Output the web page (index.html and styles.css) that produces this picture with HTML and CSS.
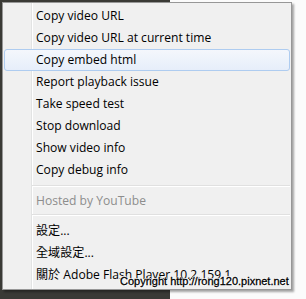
FILE: index.html
```html
<!DOCTYPE html>
<html lang="zh-Hant">
<head>
  <meta charset="UTF-8">
  <title>Flash Player context menu</title>
  <link rel="stylesheet" href="styles.css">
</head>
<body>
  <div class="screen">
    <div class="video"></div>
    <ul class="menu">
      <li class="item">Copy video URL</li>
      <li class="item">Copy video URL at current time</li>
      <li class="item active">Copy embed html</li>
      <li class="item">Report playback issue</li>
      <li class="item">Take speed test</li>
      <li class="item">Stop download</li>
      <li class="item">Show video info</li>
      <li class="item">Copy debug info</li>
      <li class="sep"></li>
      <li class="item disabled">Hosted by YouTube</li>
      <li class="sep sep-short"></li>
      <li class="item">設定...</li>
      <li class="item">全域設定...</li>
      <li class="item">關於 Adobe Flash Player 10.2.159.1</li>
    </ul>
    <div class="watermark">Copyright http://rong120.pixnet.net</div>
  </div>
</body>
</html>
```

FILE: styles.css
```css
/* Page */
body {
  margin: 0;
  background: #fbfbfb;
  font-family: 'Open Sans', 'Noto Sans CJK TC', sans-serif;
}

.screen {
  position: relative;
  width: 306px;
  height: 299px;
  overflow: hidden;
  padding: 2px 0 0 2px;
  box-sizing: border-box;
}

/* dark video frame peeking out behind the menu */
.video {
  position: absolute;
  left: 0;
  top: 0;
  width: 170px;
  height: 299px;
  background: #3a3a36;
}

/* Menu */
.menu {
  position: relative;
  list-style: none;
  margin: 0;
  padding: 2px 0 3px;
  width: 290px;
  box-sizing: border-box;
  border: 1px solid #979797;
  background:
    linear-gradient(to right, transparent 28px, #e2e3e3 28px, #e2e3e3 29px, #ffffff 29px, #ffffff 30px, transparent 30px),
    #f0f0f0;
  box-shadow: 2px 2px 2px rgba(0, 0, 0, 0.35);
  font-size: 12.1px;
  color: #000;
}

.item {
  height: 22px;
  line-height: 22px;
  padding-left: 32px;
  margin: 0 1px;
  border-radius: 3px;
  white-space: nowrap;
}

.item.active {
  height: 20px;
  line-height: 20px;
  padding-left: 31px;
  border: 1px solid #aeccf0;
  background: linear-gradient(to bottom, #f4f7fc, #e6eefa);
}

.item.disabled {
  color: #8d8d8d;
}

.sep {
  height: 9px;
  margin-left: 29px;
  margin-right: 1px;
  background: linear-gradient(to bottom, transparent 4px, #e0e0e0 4px, #e0e0e0 5px, #ffffff 5px, #ffffff 6px, transparent 6px);
}

.sep-short {
  height: 8px;
  background: linear-gradient(to bottom, transparent 2px, #e0e0e0 2px, #e0e0e0 3px, #ffffff 3px, #ffffff 4px, transparent 4px);
}

/* Watermark stamped over the screenshot */
.watermark {
  position: absolute;
  left: 120px;
  top: 275px;
  font-family: 'Liberation Sans', Arial, sans-serif;
  font-size: 11px;
  color: #000;
  -webkit-text-stroke: 0.3px #000;
  text-shadow: 1px 0 0 #fff, -1px 0 0 #fff, 0 1px 0 #fff, 0 -1px 0 #fff;
  white-space: nowrap;
}
```
